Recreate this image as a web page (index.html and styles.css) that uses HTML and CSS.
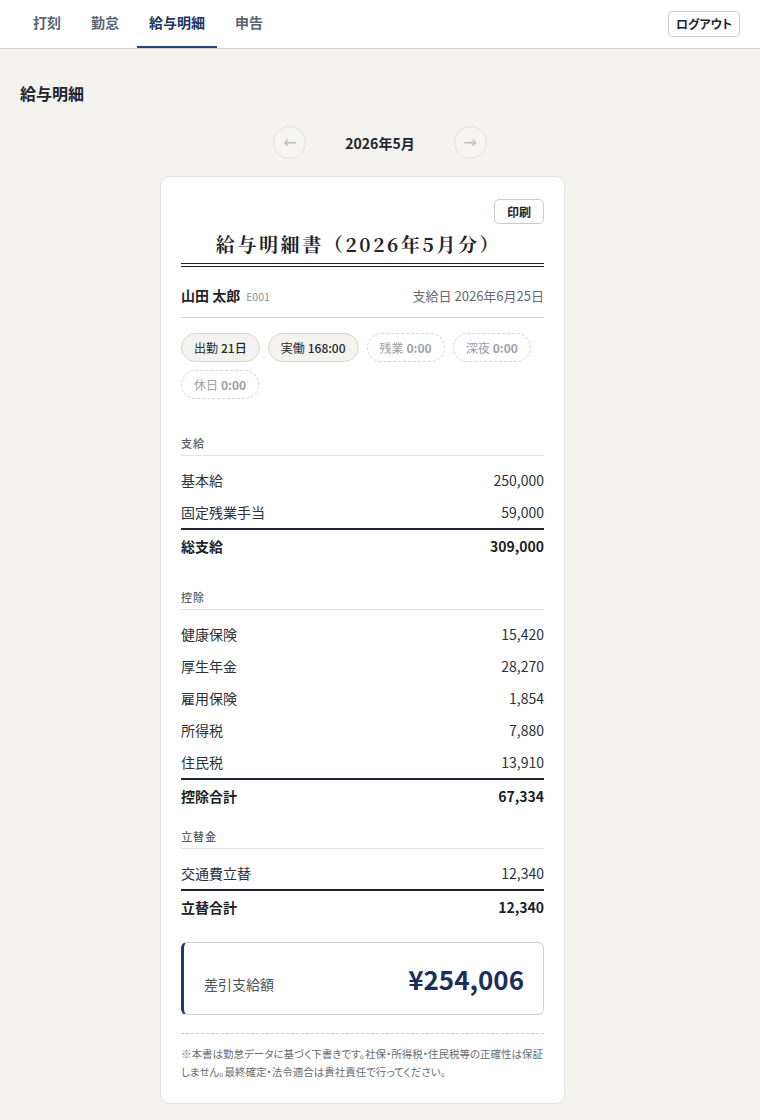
FILE: index.html
```html
<!DOCTYPE html>
<html lang="ja">
<head>
<meta charset="utf-8">
<title>給与明細</title>
<link rel="stylesheet" href="styles.css">
</head>
<body>
<header class="topbar">
  <nav class="tabs">
    <a class="tab">打刻</a>
    <a class="tab">勤怠</a>
    <a class="tab active">給与明細</a>
    <a class="tab">申告</a>
  </nav>
  <button class="btn logout">ログアウト</button>
</header>
<main class="main">
  <h1 class="page-title">給与明細</h1>
  <div class="month-nav">
    <button class="circle">←</button>
    <span class="month">2026年5月</span>
    <button class="circle">→</button>
  </div>
  <section class="sheet">
    <div class="sheet-tools"><button class="btn print">印刷</button></div>
    <h2 class="sheet-title">給与明細書（2026年5月分）</h2>
    <div class="person">
      <div><span class="name">山田 太郎</span><span class="code">E001</span></div>
      <div class="payday">支給日 2026年6月25日</div>
    </div>
    <div class="chips">
      <span class="chip">出勤 <b>21日</b></span>
      <span class="chip">実働 <b>168:00</b></span>
      <span class="chip empty">残業 <b>0:00</b></span>
      <span class="chip empty">深夜 <b>0:00</b></span>
      <span class="chip empty">休日 <b>0:00</b></span>
    </div>

    <div class="group first">
      <div class="group-label">支給</div>
      <div class="rows">
        <div class="row"><span>基本給</span><span>250,000</span></div>
        <div class="row"><span>固定残業手当</span><span>59,000</span></div>
      </div>
      <div class="row total"><span>総支給</span><span>309,000</span></div>
    </div>

    <div class="group">
      <div class="group-label">控除</div>
      <div class="rows">
        <div class="row"><span>健康保険</span><span>15,420</span></div>
        <div class="row"><span>厚生年金</span><span>28,270</span></div>
        <div class="row"><span>雇用保険</span><span>1,854</span></div>
        <div class="row"><span>所得税</span><span>7,880</span></div>
        <div class="row"><span>住民税</span><span>13,910</span></div>
      </div>
      <div class="row total"><span>控除合計</span><span>67,334</span></div>
    </div>

    <div class="group tight">
      <div class="group-label">立替金</div>
      <div class="rows">
        <div class="row"><span>交通費立替</span><span>12,340</span></div>
      </div>
      <div class="row total"><span>立替合計</span><span>12,340</span></div>
    </div>

    <div class="net">
      <span class="net-label">差引支給額</span>
      <span class="net-amount">¥254,006</span>
    </div>

    <p class="note">※本書は勤怠データに基づく下書きです。社保・所得税・住民税等の正確性は保証しません。最終確定・法令適合は貴社責任で行ってください。</p>
  </section>
</main>
</body>
</html>
```

FILE: styles.css
```css
* { box-sizing: border-box; }
body {
  margin: 0;
  background: #f3f2ef;
  color: #1f242d;
  font-family: "Noto Sans CJK JP", "Noto Sans", sans-serif;
  font-feature-settings: "palt";
}
.topbar {
  height: 49px;
  background: #fff;
  border-bottom: 1px solid #cbd0da;
  display: flex;
  align-items: center;
  justify-content: space-between;
  padding: 0 20px 0 21px;
}
.tabs { display: flex; gap: 6px; height: 48px; }
.tab {
  display: flex;
  align-items: center;
  padding: 0 12px 2px;
  font-size: 14px;
  font-weight: 700;
  color: #5b6371;
  border-bottom: 2px solid transparent;
}
.tab.active { color: #1e3463; border-bottom-color: #25427f; }
.btn {
  font-family: inherit;
  font-feature-settings: "palt";
  background: #fff;
  border: 1px solid #c7cbd3;
  border-radius: 5px;
  color: #1f242d;
  font-size: 12px;
  font-weight: 700;
  padding: 0;
}
.logout { width: 72px; height: 26px; margin-top: -1px; }
.main { padding: 32px 20px 40px; }
.page-title {
  margin: 0;
  font-size: 16px;
  line-height: 24px;
  font-weight: 700;
  color: #1f242d;
}
.month-nav {
  margin-top: 21px;
  display: flex;
  justify-content: center;
  align-items: center;
  gap: 39px;
}
.circle {
  width: 33px;
  height: 33px;
  border-radius: 50%;
  border: 1px solid #e2e0dc;
  background: #f5f4f1;
  color: #bcc0c7;
  font-size: 16px;
  padding: 0;
  font-family: "DejaVu Sans", sans-serif;
  line-height: 1;
}
.month { font-size: 14px; font-weight: 700; }
.sheet {
  width: 405px;
  margin: 17px 0 0 140px;
  background: #fff;
  border: 1px solid #e6e4df;
  border-radius: 10px;
  padding: 22px 20px 22px;
}
.sheet-tools { display: flex; justify-content: flex-end; }
.print { width: 50px; height: 25px; font-weight: 600; }
.sheet-title {
  margin: 6px 0 0;
  padding: 0 8px 5px 0;
  text-align: center;
  font-family: "Noto Serif CJK JP", "Liberation Serif", serif;
  font-feature-settings: normal;
  font-size: 19px;
  line-height: 28px;
  font-weight: 700;
  letter-spacing: 2.6px;
  border-bottom: 4px double #1e2433;
  color: #1f242d;
}
.person {
  display: flex;
  justify-content: space-between;
  align-items: baseline;
  padding: 17px 0 10px;
  line-height: 20px;
  border-bottom: 1px solid #d3d3d3;
}
.name { font-size: 14px; font-weight: 700; }
.code { font-size: 10.5px; color: #8b919b; margin-left: 6px; }
.payday { font-size: 13px; color: #646a74; }
.chips {
  margin-top: 15px;
  display: flex;
  flex-wrap: wrap;
  gap: 8px;
}
.chip {
  display: inline-flex;
  align-items: center;
  gap: 3px;
  height: 29px;
  padding: 0 12px;
  border-radius: 15px;
  background: #f3f2ee;
  border: 1px solid #d9d7d1;
  font-size: 12px;
  font-weight: 400;
  color: #242a33;
}
.chip b { font-weight: 500; }
.chip.empty {
  background: #fff;
  border: 1px dashed #d8d8d8;
  color: #9aa0a9;
  font-weight: 400;
}
.chip.empty b { font-weight: 700; }
.group { margin-top: 23px; }
.group.first { margin-top: 36px; }
.group.tight { margin-top: 12px; }
.group-label {
  font-size: 11px;
  line-height: 16px;
  font-weight: 500;
  color: #575e69;
  letter-spacing: 1px;
  padding-bottom: 4px;
  border-bottom: 1px solid #e3e2de;
}
.rows { padding-top: 8px; }
.row {
  display: flex;
  justify-content: space-between;
  font-size: 14px;
  line-height: 20px;
  padding: 6px 0;
  color: #2c323b;
}
.row.total {
  border-top: 2px solid #1e2433;
  padding: 6px 0 10px;
  line-height: 20px;
  font-weight: 700;
  color: #1b1f27;
}
.net {
  margin-top: 15px;
  display: flex;
  justify-content: space-between;
  align-items: baseline;
  padding: 19px 19px 19px 20px;
  border: 1px solid #c6d3e8;
  border-left: 3px solid #1f3a72;
  border-radius: 6px;
}
.net-label { font-size: 14px; color: #4c5260; }
.net-amount {
  font-size: 26px;
  line-height: 33px;
  font-weight: 700;
  color: #1b2f5c;
}
.note {
  margin: 18px 0 0;
  padding-top: 11px;
  border-top: 1px dashed #c8ccd4;
  font-size: 10.5px;
  line-height: 18px;
  color: #666c75;
}
```
